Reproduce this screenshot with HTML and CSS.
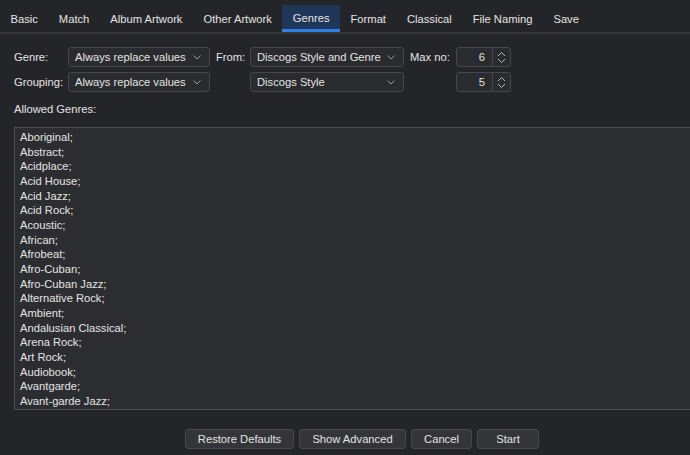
FILE: index.html
```html
<!DOCTYPE html>
<html>
<head>
<meta charset="utf-8">
<link rel="stylesheet" href="styles.css">
</head>
<body>
<div class="tabs">
  <div class="tab">Basic</div>
  <div class="tab">Match</div>
  <div class="tab">Album Artwork</div>
  <div class="tab">Other Artwork</div>
  <div class="tab active">Genres</div>
  <div class="tab">Format</div>
  <div class="tab">Classical</div>
  <div class="tab">File Naming</div>
  <div class="tab">Save</div>
</div>
<div class="content">
  <div class="form">
    <div class="label">Genre:</div>
    <div class="select"><span>Always replace values</span><svg class="chev" width="8" height="5" viewBox="0 0 8 5"><path d="M0.5 0.5 L4 4 L7.5 0.5" fill="none" stroke="#9a9b9d" stroke-width="1"/></svg></div>
    <div class="label pad">From:</div>
    <div class="select"><span>Discogs Style and Genre</span><svg class="chev" width="8" height="5" viewBox="0 0 8 5"><path d="M0.5 0.5 L4 4 L7.5 0.5" fill="none" stroke="#9a9b9d" stroke-width="1"/></svg></div>
    <div class="label pad">Max no:</div>
    <div class="spin"><span class="val">6</span><span class="arrows"><svg width="9" height="13" viewBox="0 0 9 13"><path d="M1 5 L4.5 1.5 L8 5 M1 8 L4.5 11.5 L8 8" fill="none" stroke="#b5b6b8" stroke-width="1"/></svg></span></div>

    <div class="label">Grouping:</div>
    <div class="select"><span>Always replace values</span><svg class="chev" width="8" height="5" viewBox="0 0 8 5"><path d="M0.5 0.5 L4 4 L7.5 0.5" fill="none" stroke="#9a9b9d" stroke-width="1"/></svg></div>
    <div></div>
    <div class="select"><span>Discogs Style</span><svg class="chev" width="8" height="5" viewBox="0 0 8 5"><path d="M0.5 0.5 L4 4 L7.5 0.5" fill="none" stroke="#9a9b9d" stroke-width="1"/></svg></div>
    <div></div>
    <div class="spin"><span class="val">5</span><span class="arrows"><svg width="9" height="13" viewBox="0 0 9 13"><path d="M1 5 L4.5 1.5 L8 5 M1 8 L4.5 11.5 L8 8" fill="none" stroke="#b5b6b8" stroke-width="1"/></svg></span></div>
  </div>
  <div class="allowed">Allowed Genres:</div>
  <div class="textarea">
    <div>Aboriginal;</div>
    <div>Abstract;</div>
    <div>Acidplace;</div>
    <div>Acid House;</div>
    <div>Acid Jazz;</div>
    <div>Acid Rock;</div>
    <div>Acoustic;</div>
    <div>African;</div>
    <div>Afrobeat;</div>
    <div>Afro-Cuban;</div>
    <div>Afro-Cuban Jazz;</div>
    <div>Alternative Rock;</div>
    <div>Ambient;</div>
    <div>Andalusian Classical;</div>
    <div>Arena Rock;</div>
    <div>Art Rock;</div>
    <div>Audiobook;</div>
    <div>Avantgarde;</div>
    <div>Avant-garde Jazz;</div>
  </div>
  <div class="buttons">
    <div class="btn w-restore">Restore Defaults</div>
    <div class="btn w-adv">Show Advanced</div>
    <div class="btn w-cancel">Cancel</div>
    <div class="btn w-start">Start</div>
  </div>
</div>
</body>
</html>
```

FILE: styles.css
```css
html, body {
  margin: 0;
  padding: 0;
  background: #242528;
  color: #e4e4e5;
  font-family: "Liberation Sans", Arial, sans-serif;
  font-size: 11.2px;
  overflow: hidden;
}
.tabs {
  display: flex;
  height: 32px;
  border-bottom: 2px solid #353638;
  box-sizing: content-box;
}
.tab {
  padding: 0 10.5px;
  line-height: 38px;
  height: 32px;
  box-sizing: border-box;
  white-space: nowrap;
}
.tab.active {
  margin-top: 5px;
  height: 27px;
  line-height: 27px;
  padding-top: 1px;
  background: #1f3658;
  border-bottom: 3px solid #2f7fe6;
  line-height: 24px;
}
.content {
  padding: 13px 0 0 14px;
}
.form {
  display: grid;
  grid-template-columns: 54px 142px 40px 154px 52px 55px;
  grid-auto-rows: 20px;
  row-gap: 5px;
  align-items: center;
}
.label {
  white-space: nowrap;
}
.label.pad {
  padding-left: 6px;
}
.select {
  height: 20px;
  box-sizing: border-box;
  border: 1px solid #46474a;
  border-radius: 3px;
  background: #2a2b2e;
  display: flex;
  align-items: center;
  justify-content: space-between;
  padding: 0 8px 0 6px;
  white-space: nowrap;
}
.chev {
  display: block;
}
.spin {
  height: 20px;
  box-sizing: border-box;
  border: 1px solid #46474a;
  border-radius: 3px;
  background: #2a2b2e;
  display: flex;
}
.spin .val {
  flex: 1;
  text-align: right;
  padding-right: 7px;
  line-height: 18px;
}
.spin .arrows {
  width: 17px;
  border-left: 1px solid #46474a;
  display: flex;
  align-items: center;
  justify-content: center;
}
.allowed {
  margin-top: 10px;
  line-height: 14px;
}
.textarea {
  margin-top: 11px;
  margin-right: -20px;
  height: 283px;
  box-sizing: border-box;
  border: 1px solid #4e4f52;
  background: #2c2d30;
  padding: 2px 5px;
  line-height: 14.67px;
  overflow: hidden;
  white-space: nowrap;
}
.buttons {
  display: flex;
  gap: 5px;
  margin-top: 19px;
  padding-left: 171px;
}
.btn {
  height: 20px;
  box-sizing: border-box;
  border: 1px solid #47484b;
  border-radius: 3px;
  background: #343538;
  text-align: center;
  line-height: 18px;
  white-space: nowrap;
}
.w-restore { width: 109px; }
.w-adv { width: 107px; }
.w-cancel { width: 61px; }
.w-start { width: 62px; }
```
